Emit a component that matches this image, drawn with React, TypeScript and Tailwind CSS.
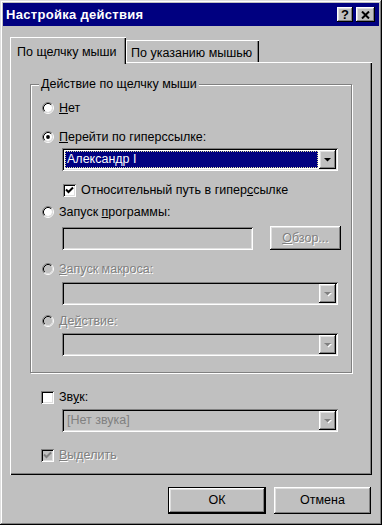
import React from 'react'

const raised = 'shadow-[inset_-1px_-1px_0_#000,inset_1px_1px_0_#fff,inset_-2px_-2px_0_#808080,inset_2px_2px_0_#dfdfdf]'
const sunken = 'shadow-[inset_1px_1px_0_#808080,inset_-1px_-1px_0_#fff,inset_2px_2px_0_#000,inset_-2px_-2px_0_#dfdfdf]'
const dim = 'text-[#808080] [text-shadow:1px_1px_0_#fff]'

function Radio({ checked = false, disabled = false }: { checked?: boolean; disabled?: boolean }) {
    return (
        <svg width="12" height="12" viewBox="0 0 12 12" className="shrink-0">
            <circle cx="6" cy="6" r="4" fill={disabled ? '#c0c0c0' : '#fff'} />
            <path d="M2.11 9.89 A5.5 5.5 0 0 1 9.89 2.11" fill="none" stroke="#808080" />
            <path d="M9.89 2.11 A5.5 5.5 0 0 1 2.11 9.89" fill="none" stroke="#fff" />
            <path d="M2.82 9.18 A4.5 4.5 0 0 1 9.18 2.82" fill="none" stroke="#000" />
            <path d="M9.18 2.82 A4.5 4.5 0 0 1 2.82 9.18" fill="none" stroke="#dfdfdf" />
            {checked && <circle cx="6" cy="6" r="1.9" fill="#000" />}
        </svg>
    )
}

function Check({ checked = false, disabled = false }: { checked?: boolean; disabled?: boolean }) {
    return (
        <div className={`w-[13px] h-[13px] shrink-0 flex items-center justify-center ${sunken} ${disabled ? 'bg-[#c0c0c0]' : 'bg-white'}`}>
            {checked && (
                <svg width="9" height="9" viewBox="0 0 9 9">
                    <path d="M1 3.5 L3.5 6 L8 1.5" fill="none" stroke={disabled ? '#808080' : '#000'} strokeWidth="2" />
                </svg>
            )}
        </div>
    )
}

function Arrow({ disabled = false }: { disabled?: boolean }) {
    return (
        <div className={`w-[17px] h-full shrink-0 bg-[#c0c0c0] flex items-center justify-center ${raised}`}>
            <svg width="9" height="6" viewBox="0 0 9 6">
                {disabled && <path d="M2 2 H9 L5.5 5.5 Z" fill="#fff" />}
                <path d="M1 1 H8 L4.5 4.5 Z" fill={disabled ? '#808080' : '#000'} />
            </svg>
        </div>
    )
}

function Combo({ value, selected = false, disabled = false }: { value?: string; selected?: boolean; disabled?: boolean }) {
    return (
        <div className={`w-[276px] h-[23px] p-[2px] flex ${sunken} ${disabled ? 'bg-[#c0c0c0]' : 'bg-white'}`}>
            <div className="flex-1 flex p-[1px]">
                {selected ? (
                    <div className="flex-1 bg-[#000080] text-white border border-dotted border-[#e0e0a0] flex items-center pl-[1px] leading-none">{value}</div>
                ) : (
                    <div className={`flex-1 flex items-center pl-[2px] leading-none ${disabled ? 'text-[#808080]' : ''}`}>{value}</div>
                )}
            </div>
            <Arrow disabled={disabled} />
        </div>
    )
}

function Row({ children, className = '' }: { children: React.ReactNode; className?: string }) {
    return <div className={`h-[16px] flex items-center gap-[5px] leading-[16px] ${className}`}>{children}</div>
}

export default function App() {
    return (
        <div className={`w-[382px] h-[525px] bg-[#c0c0c0] flex flex-col text-[12.5px] text-black font-['Liberation_Sans',Arial,sans-serif] ${'shadow-[inset_-1px_-1px_0_#000,inset_1px_1px_0_#dfdfdf,inset_-2px_-2px_0_#808080,inset_2px_2px_0_#fff]'}`}>
            <div className="mx-[3px] mt-[3px] h-[23px] bg-[#000080] flex items-center pl-[3px] pr-[4px]">
                <span className="text-white font-bold text-[13px] tracking-[0.3px] flex-1">Настройка действия</span>
                <div className={`w-[16px] h-[15px] bg-[#c0c0c0] flex items-center justify-center font-bold text-[13px] leading-none ${raised}`}>?</div>
                <div className={`ml-[3px] w-[19px] h-[15px] bg-[#c0c0c0] flex items-center justify-center ${raised}`}>
                    <svg width="9" height="8" viewBox="0 0 9 8">
                        <path d="M1 0.5 L8 7.5 M8 0.5 L1 7.5" stroke="#000" strokeWidth="2" />
                    </svg>
                </div>
            </div>

            <div className="px-[10px] mt-[11px]">
                <div className="relative z-10 flex items-end h-[27px] -mb-[2px]">
                    <div className="w-[116px] h-[27px] bg-[#c0c0c0] pl-[7px] pt-[6px] shadow-[inset_1px_1px_0_#fff,inset_-1px_0_0_#000,inset_-2px_0_0_#808080]">
                        По щелчку мыши
                    </div>
                    <div className="mb-[2px] w-[133px] h-[22px] pl-[5px] pt-[4px] shadow-[inset_1px_1px_0_#fff,inset_-1px_0_0_#000,inset_-2px_0_0_#808080]">
                        По указанию мышью
                    </div>
                </div>
                <div className="h-[413px] pt-[22px] px-[20px] shadow-[inset_1px_1px_0_#fff,inset_-1px_-1px_0_#000,inset_-2px_-2px_0_#808080]">
                    <div className="relative h-[289px] border border-[#808080] shadow-[1px_1px_0_#fff,inset_1px_1px_0_#fff] pl-[11px]">
                        <span className="absolute -top-[9px] left-[8px] px-[2px] bg-[#c0c0c0] leading-[16px]">Действие по щелчку мыши</span>
                        <Row className="mt-[15px]"><Radio /><span><u>Н</u>ет</span></Row>
                        <Row className="mt-[13px]"><Radio checked /><span><u>П</u>ерейти по гиперссылке:</span></Row>
                        <div className="mt-[3px] ml-[20px]"><Combo value="Александр I" selected /></div>
                        <Row className="mt-[11px] ml-[21px]"><Check checked /><span>Относительный путь в гипер<u>с</u>сылке</span></Row>
                        <Row className="mt-[6px]"><Radio /><span>Запуск <u>п</u>рограммы:</span></Row>
                        <div className="mt-[7px] ml-[20px] flex gap-[17px]">
                            <div className={`w-[191px] h-[23px] bg-[#c0c0c0] ${sunken}`} />
                            <div className={`w-[71px] h-[24px] -mt-[1px] bg-[#c0c0c0] flex items-center justify-center ${dim} ${raised}`}>
                                <span><u>О</u>бзор...</span>
                            </div>
                        </div>
                        <Row className="mt-[11px]"><Radio disabled /><span className={dim}><u>З</u>апуск макроса:</span></Row>
                        <div className="mt-[5px] ml-[20px]"><Combo disabled /></div>
                        <Row className="mt-[8px]"><Radio disabled /><span className={dim}>Де<u>й</u>ствие:</span></Row>
                        <div className="mt-[4px] ml-[20px]"><Combo disabled /></div>
                    </div>
                    <div className="pl-[11px]">
                        <Row className="mt-[16px]"><Check /><span>Зв<u>у</u>к:</span></Row>
                        <div className="mt-[4px] ml-[21px]"><Combo value="[Нет звука]" disabled /></div>
                        <Row className="mt-[15px]"><Check checked disabled /><span className={dim}><u>В</u>ыделить</span></Row>
                    </div>
                </div>
            </div>

            <div className="mt-[12px] pr-[11px] flex justify-end gap-[8px]">
                <div className="w-[98px] h-[27px] border border-black">
                    <div className={`w-full h-full flex items-center justify-center ${raised}`}>ОК</div>
                </div>
                <div className={`w-[97px] h-[27px] flex items-center justify-center ${raised}`}>Отмена</div>
            </div>
        </div>
    )
}
